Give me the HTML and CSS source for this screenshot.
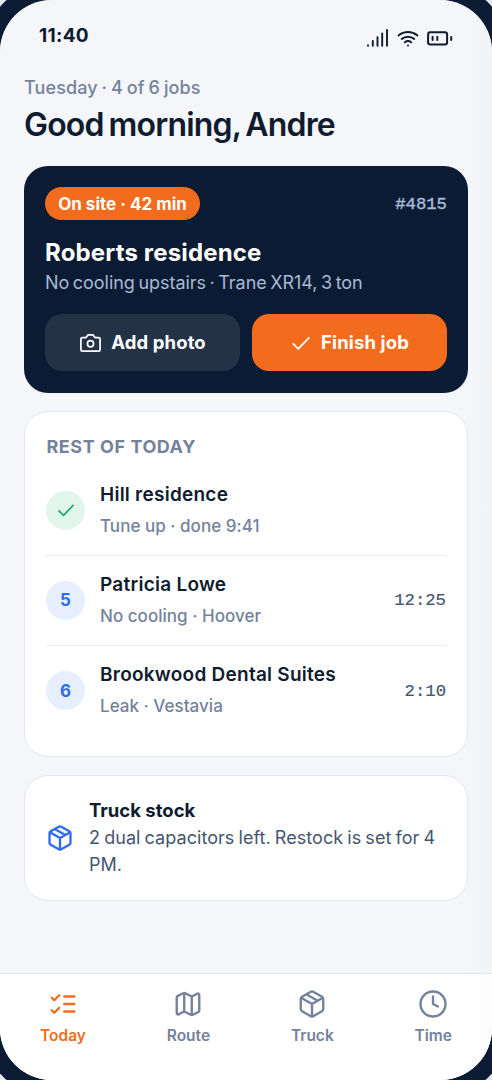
FILE: index.html
```html
<!DOCTYPE html>
<html lang="en">
<head>
<meta charset="utf-8">
<title>Today</title>
<link rel="stylesheet" href="styles.css">
</head>
<body>
<svg class="sprite" aria-hidden="true">
  <symbol id="box" viewBox="0 0 24 24"><path d="m7.500 4.270 9 5.150M21 8a2 2 0 0 0-1-1.730l-7-4a2 2 0 0 0-2 0l-7 4A2 2 0 0 0 3 8v8a2 2 0 0 0 1 1.730l7 4a2 2 0 0 0 2 0l7-4A2 2 0 0 0 21 16ZM3.300 7l8.700 5 8.700-5M12 22V12"/></symbol>
</svg>
<main class="phone">
  <header class="status">
    <span class="clock">11:40</span>
    <span class="indicators">
      <svg class="signal" viewBox="0 0 22 18"><path d="M1 16.200v.6M5.800 12v4.800M10.500 8.300v8.500M15.200 4.500v12.300M20 1v15.800"/></svg>
      <svg class="wifi" viewBox="0 0 22 17"><path d="M1.500 5.500c5.600-4.600 13.400-4.600 19 0M4.700 9c3.700-3.100 8.900-3.100 12.600 0M7.800 12.300c1.900-1.500 4.500-1.500 6.400 0M11 15.400v.1"/></svg>
      <svg class="battery" viewBox="0 0 26 15"><rect x="1.100" y="1.300" width="19" height="12.200" rx="2.200"/><path d="M5.600 5.700v3.400M10.300 5.700v3.400M24.200 5.900v3"/></svg>
    </span>
  </header>
  <section class="content">
    <p class="date">Tuesday · 4 of 6 jobs</p>
    <h1>Good morning, Andre</h1>
    <article class="current">
      <div class="current-top"><span class="pill">On site · 42 min</span><span class="number">#4815</span></div>
      <h2>Roberts residence</h2>
      <p class="problem">No cooling upstairs · Trane XR14, 3 ton</p>
      <div class="actions">
        <button class="btn"><svg class="camera" viewBox="0 0 24 24"><path d="M14.500 4h-5L7 7H3.500A1.500 1.500 0 0 0 2 8.500v11A1.500 1.500 0 0 0 3.500 21h17a1.500 1.500 0 0 0 1.500-1.500v-11A1.500 1.500 0 0 0 20.500 7H17l-2.500-3z"/><circle cx="12" cy="13.300" r="3.200"/></svg><span>Add photo</span></button>
        <button class="btn primary"><svg class="tick" viewBox="0 0 24 24"><path d="m3.500 13 5.500 5.500L20.500 6.500"/></svg><span>Finish job</span></button>
      </div>
    </article>
    <section class="card rest">
      <h3>REST OF TODAY</h3>
      <div class="job"><span class="badge done"><svg viewBox="0 0 24 24"><path d="m3.500 13 5.500 5.500L20.500 6.500"/></svg></span><div class="info"><strong>Hill residence</strong><small>Tune up · done 9:41</small></div></div>
      <div class="job"><span class="badge">5</span><div class="info"><strong>Patricia Lowe</strong><small>No cooling · Hoover</small></div><time>12:25</time></div>
      <div class="job"><span class="badge">6</span><div class="info"><strong>Brookwood Dental Suites</strong><small>Leak · Vestavia</small></div><time>2:10</time></div>
    </section>
    <section class="card stock">
      <svg><use href="#box"/></svg>
      <div><h4>Truck stock</h4><p>2 dual capacitors left. Restock is set for 4 PM.</p></div>
    </section>
  </section>
  <nav class="tabs">
    <a class="tab active"><svg viewBox="0 0 24 24"><path d="m3 17 2 2 4-4M3 7l2 2 4-4M13 6h8M13 12h8M13 18h8"/></svg><span>Today</span></a>
    <a class="tab"><svg viewBox="0 0 24 24"><path d="M14.106 5.553a2 2 0 0 0 1.788 0l3.659-1.830A1 1 0 0 1 21 4.619v12.764a1 1 0 0 1-.553.894l-4.553 2.277a2 2 0 0 1-1.788 0l-4.212-2.106a2 2 0 0 0-1.788 0l-3.659 1.830A1 1 0 0 1 3 19.381V6.618a1 1 0 0 1 .553-.894l4.553-2.277a2 2 0 0 1 1.788 0zM15 5.764v15M9 3.236v15"/></svg><span>Route</span></a>
    <a class="tab"><svg><use href="#box"/></svg><span>Truck</span></a>
    <a class="tab"><svg viewBox="0 0 24 24"><circle cx="12" cy="12" r="10"/><path d="M12 6v6l4 2"/></svg><span>Time</span></a>
  </nav>
</main>
</body>
</html>
```
FILE: styles.css
```css
* { box-sizing: border-box; margin: 0; padding: 0; }
html, body { height: 1080px; overflow: hidden; background: #e3e6ec; }
body { font-family: Inter, "Noto Sans", sans-serif; color: #0f1b2e; }
svg { display: block; flex: none; fill: none; stroke: currentColor; stroke-width: 1.900; stroke-linecap: round; stroke-linejoin: round; }
.sprite { display: none; }
.phone { width: 492px; height: 1079.500px; display: flex; flex-direction: column; border-radius: 52px; overflow: hidden; background: linear-gradient(90deg, #f4f6fa 94%, #f2f4f8); box-shadow: 0 0 0 17px #0b1b33; }
.status { height: 74px; display: flex; justify-content: space-between; padding: 24px 39px 0; }
.clock { font-size: 19px; font-weight: 700; line-height: 24px; letter-spacing: .3px; }
.indicators { display: flex; padding-top: 5px; }
.signal { width: 22px; height: 18px; stroke-width: 1.900; }
.wifi { width: 22px; height: 17px; margin: 1px 8.500px 0 7.500px; stroke-width: 1.900; }
.battery { width: 26px; height: 15px; margin-top: 2px; stroke-width: 2; }
.content { flex: 1; padding: 0 24px; }
.date { font-size: 18px; line-height: 28px; font-weight: 500; color: #74829b; letter-spacing: .1px; word-spacing: -1px; }
h1 { font-size: 32px; line-height: 46px; font-weight: 600; letter-spacing: -.800px; word-spacing: -2.500px; }
.current { margin-top: 18px; height: 226.500px; padding: 21px; border-radius: 24px; background: #0b1b33; color: #fff; }
.current-top { display: flex; justify-content: space-between; align-items: center; }
.pill { height: 33px; width: 155px; text-align: center; line-height: 34px; border-radius: 17px; background: #f36c1d; font-size: 17px; font-weight: 700; }
.number, time { font-family: "Liberation Mono", monospace; font-size: 17.300px; -webkit-text-stroke: .2px currentColor; }
.number { color: #a9b9d6; padding-top: 2px; -webkit-text-stroke-width: .4px; }
h2 { margin-top: 16px; font-size: 24px; line-height: 34px; font-weight: 700; letter-spacing: .16px; }
.problem { font-size: 18px; line-height: 26px; color: #a9b9d6; font-weight: 400; letter-spacing: -.03px; word-spacing: -1.500px; }
.actions { margin-top: 17.500px; display: grid; grid-template-columns: 1fr 1fr; gap: 12px; }
.btn { display: flex; align-items: center; justify-content: center; height: 57px; border: 0; border-radius: 17px; background: #243247; color: #fff; font: 700 18.500px Inter, sans-serif; letter-spacing: .12px; }
.btn.primary { background: #f36c1d; }
.camera { width: 23px; height: 23px; margin: 1px 9px 0 0; stroke-width: 1.800; }
.tick { width: 22px; height: 22px; margin: 1px 9px 0 0; }
.card { margin-top: 18px; border: 1.500px solid #e2e6ef; border-radius: 24px; background: #fff; }
.rest { height: 346.500px; padding: 20px 21px 0; }
h3 { margin-bottom: 4px; padding-left: .5px; font-size: 18px; line-height: 30px; font-weight: 700; color: #74829b; letter-spacing: .55px; }
.job { display: flex; align-items: center; height: 90px; border-bottom: 1px solid #e9edf4; }
.job:last-child { border: 0; }
.badge { display: grid; place-items: center; width: 39px; height: 39px; margin-right: 15px; border-radius: 50%; background: #e7effe; color: #2f6bed; font-size: 17px; font-weight: 700; }
.badge.done { background: #e1f5ec; color: #16a570; }
.badge svg { width: 20px; height: 20px; }
.info { flex: 1; }
.info strong { display: block; font-size: 19px; line-height: 30px; font-weight: 600; letter-spacing: .25px; }
.info small { display: block; font-size: 17px; line-height: 31px; font-weight: 500; color: #74829b; letter-spacing: .03px; position: relative; top: 1px; }
time { color: #46556f; padding-top: 1px; }
.stock { height: 126px; display: flex; align-items: center; padding: 0 21px 2px; }
.stock svg { width: 28px; height: 28px; margin: 2px 15px 0 0; color: #2f6bed; stroke-width: 2; }
h4 { font-size: 18.500px; line-height: 27px; font-weight: 700; }
.stock p { font-size: 18px; line-height: 27px; color: #46556f; letter-spacing: .05px; word-spacing: -1px; }
.tabs { height: 106.500px; border-top: 1.500px solid #e2e6ef; background: linear-gradient(90deg, #fff 94%, #fcfcfd); display: flex; justify-content: space-between; padding: 15px 40px 0; }
.tab { display: flex; flex-direction: column; align-items: center; font-size: 15.500px; font-weight: 600; line-height: 34px; color: #74829b; }
.tab svg { width: 30px; height: 30px; }
.tab.active { color: #f36c1d; }
```
